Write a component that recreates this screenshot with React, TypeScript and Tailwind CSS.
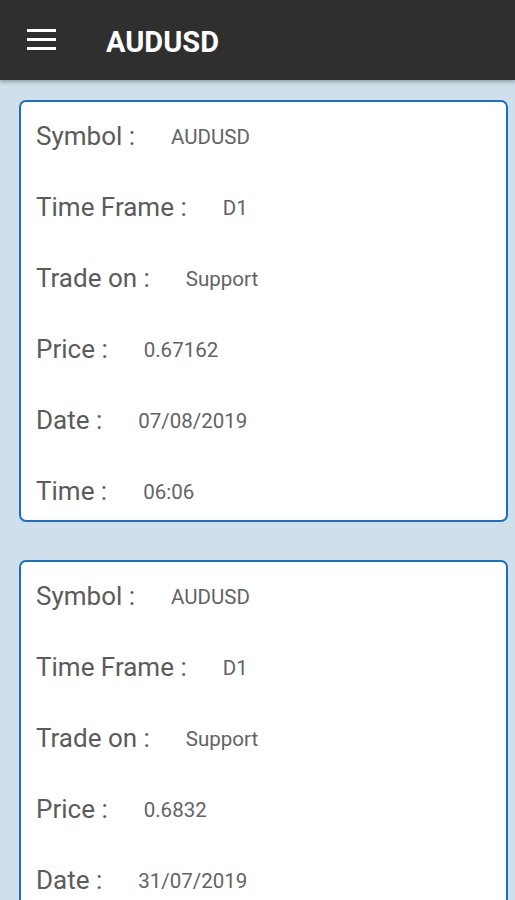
import React from "react";

type Item = { symbol: string; tf: string; trade: string; price: string; date: string; time: string };

const items: Item[] = [
  { symbol: "AUDUSD", tf: "D1", trade: "Support", price: "0.67162", date: "07/08/2019", time: "06:06" },
  { symbol: "AUDUSD", tf: "D1", trade: "Support", price: "0.6832", date: "31/07/2019", time: "05:12" },
];

function Row({ label, value }: { label: string; value: string }) {
  return (
    <div className="flex items-center h-[32px] whitespace-nowrap">
      <span className="text-[26px] text-[#5b5b5b] leading-[32px]">{label}</span>
      <span className="ml-[36px] text-[20.5px] text-[#636363] leading-[32px] pt-[2px]">{value}</span>
    </div>
  );
}

function Card({ it }: { it: Item }) {
  return (
    <div className="ml-[19px] mr-[7px] h-[422px] shrink-0 rounded-[7px] border-2 border-[#1b6ec4] bg-white pl-[15px] pt-[18px] flex flex-col gap-[39px] overflow-hidden">
      <Row label="Symbol :" value={it.symbol} />
      <Row label="Time Frame :" value={it.tf} />
      <Row label="Trade on :" value={it.trade} />
      <Row label="Price :" value={it.price} />
      <Row label="Date :" value={it.date} />
      <Row label="Time :" value={it.time} />
    </div>
  );
}

export default function App() {
  return (
    <div className="w-[515px] h-[900px] overflow-hidden bg-[#cfe0ec] flex flex-col" style={{ fontFamily: "Roboto, 'Noto Sans', sans-serif" }}>
      <div className="h-[80px] shrink-0 bg-[#2f2f2f] flex items-center shadow-[0_2px_4px_rgba(0,0,0,0.3)] relative z-10">
        <svg width="29" height="22" viewBox="0 0 29 22" className="ml-[27px]">
          <rect x="0" y="0" width="29" height="3" fill="#fff" />
          <rect x="0" y="9" width="29" height="3" fill="#fff" />
          <rect x="0" y="18" width="29" height="3" fill="#fff" />
        </svg>
        <span className="ml-[50px] text-[29px] font-bold text-white leading-none pt-[4px]">AUDUSD</span>
      </div>
      <div className="flex flex-col gap-[38px] pt-[20px]">
        {items.map((it, i) => (
          <Card key={i} it={it} />
        ))}
      </div>
    </div>
  );
}
